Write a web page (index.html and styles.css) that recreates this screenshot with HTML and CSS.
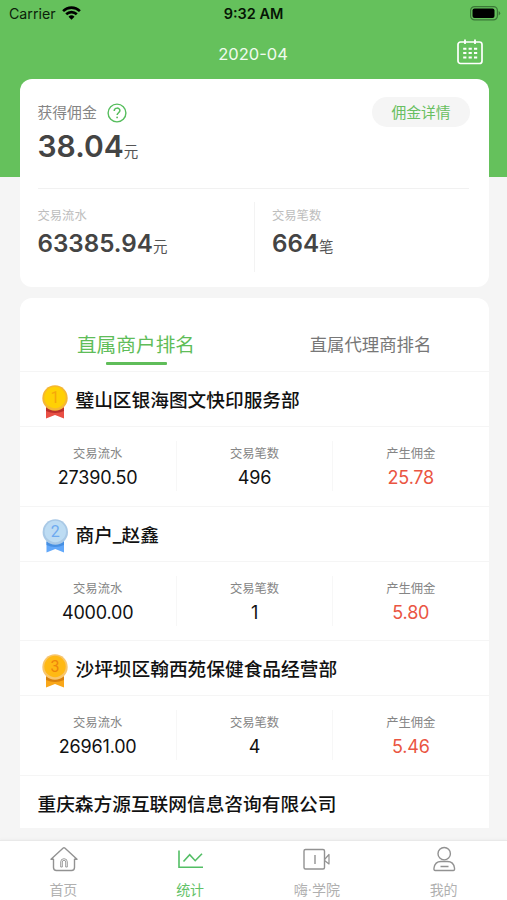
FILE: index.html
```html
<!DOCTYPE html>
<html lang="zh-CN">
<head>
<meta charset="utf-8">
<meta name="viewport" content="width=device-width">
<title>统计</title>
<link rel="stylesheet" href="styles.css">
</head>
<body>
<div class="app">
  <header class="top">
    <div class="status">
      <div class="carrier"><span>Carrier</span>
        <svg width="19" height="14" viewBox="0 0 19 14" fill="none" stroke="#000" stroke-width="2.6"><path d="M1.1 5.1a12 12 0 0 1 16.8 0M4.2 8.3a7.6 7.6 0 0 1 10.6 0"/><path d="M6.5 10.7a4.3 4.3 0 0 1 6 0L9.500 13.700z" fill="#000" stroke="none"/></svg>
      </div>
      <div class="time">9:32 AM</div>
      <svg class="battery" width="31" height="15" viewBox="0 0 31 15"><rect x=".6" y=".6" width="26.800" height="13.300" rx="4" fill="none" stroke="#3b7837" stroke-width="1.200"/><rect x="2.500" y="2.500" width="22" height="9.500" rx="2" fill="#000"/><path d="M28.600 5v4.500q1.600-.6 1.600-2.200T28.600 5z" fill="#3b7837"/></svg>
    </div>
    <div class="titlebar">
      <h1>2020-04</h1>
      <svg class="calendar" width="26" height="26" viewBox="0 0 26 26" fill="none" stroke="#fff" stroke-width="1.700"><rect x="1" y="3" width="24" height="21.500" rx="2.500"/><path d="M8 .5v4.500M18 .5v4.500" stroke-width="1.800"/><path d="M6.200 9.800h14M6.200 14.100h14M6.200 18.400h14" stroke-width="2" stroke-dasharray="3.200 2.200"/></svg>
    </div>
  </header>
  <main>
    <section class="card summary">
      <div class="earned">
        <div>
          <div class="caption"><span>获得佣金</span>
            <svg width="20" height="20" viewBox="0 0 20 20" fill="none" stroke="#55bd5c" stroke-width="1.400"><circle cx="10" cy="10" r="8.900"/><path d="M7.200 7.900c.1-3.700 5.700-3.600 5.700-.3 0 2.100-2.800 2.300-2.800 4.500" stroke-width="1.500"/><circle cx="10.100" cy="14.400" r=".9" fill="#55bd5c" stroke="none"/></svg>
          </div>
          <div class="amount big">38.04<small>元</small></div>
        </div>
        <a class="pill">佣金详情</a>
      </div>
      <div class="totals">
        <div class="total"><div class="label">交易流水</div><div class="amount">63385.94<small>元</small></div></div>
        <div class="total"><div class="label">交易笔数</div><div class="amount">664<small>笔</small></div></div>
      </div>
    </section>
    <section class="card ranking">
      <nav class="tabs"><a class="tab active">直属商户排名</a><a class="tab">直属代理商排名</a></nav>
      <article class="merchant">
        <h2><svg class="medal" width="27" height="36" viewBox="0 0 27 36"><path d="M5 23h18v11.500l-9-3.500-9 3.500z" fill="#e94f45"/><path d="M5 24h18v3q-9 4-18 0z" fill="#b92f2c"/><circle cx="14" cy="14" r="12.700" fill="#f5b733"/><circle cx="14" cy="13.500" r="10.700" fill="#ffd004"/><text x="14" y="18.800" fill="#f6a70b">1</text></svg>璧山区银海图文快印服务部</h2>
        <div class="stats"><div><span>交易流水</span><b>27390.50</b></div><div><span>交易笔数</span><b>496</b></div><div><span>产生佣金</span><b class="red">25.78</b></div></div>
      </article>
      <article class="merchant">
        <h2><svg class="medal" width="27" height="36" viewBox="0 0 27 36"><path d="M5.500 23h17.500v11.500l-8.700-3.500-8.800 3.500z" fill="#62a8fa"/><path d="M5.500 24H23v3q-9 4-17.500 0z" fill="#468fe2"/><circle cx="14.300" cy="14" r="12.700" fill="#a9c9e6"/><circle cx="14.300" cy="13.500" r="10.700" fill="#bddcf3"/><text x="14.300" y="18.800" fill="#6eaaf0">2</text></svg>商户_赵鑫</h2>
        <div class="stats"><div><span>交易流水</span><b>4000.00</b></div><div><span>交易笔数</span><b>1</b></div><div><span>产生佣金</span><b class="red">5.80</b></div></div>
      </article>
      <article class="merchant">
        <h2><svg class="medal" width="27" height="36" viewBox="0 0 27 36"><path d="M5 23h18v11.500l-9-3.500-9 3.500z" fill="#f9a719"/><path d="M5 24h18v3q-9 4-18 0z" fill="#d77f0c"/><circle cx="14" cy="14" r="12.700" fill="#f8c56c"/><circle cx="14" cy="13.500" r="10.700" fill="#ffb914"/><text x="14" y="18.800" fill="#ee850b">3</text></svg>沙坪坝区翰西苑保健食品经营部</h2>
        <div class="stats"><div><span>交易流水</span><b>26961.00</b></div><div><span>交易笔数</span><b>4</b></div><div><span>产生佣金</span><b class="red">5.46</b></div></div>
      </article>
      <article class="merchant"><h2>重庆森方源互联网信息咨询有限公司</h2></article>
    </section>
  </main>
  <nav class="bottom">
    <a><svg width="30" height="28" viewBox="0 0 30 28" fill="none" stroke="#929292" stroke-width="1.400" stroke-linejoin="round"><path d="M3 14.200 15.200 3q.8-.6 1.600 0L29 14.200h-2.500v8.300q0 3-3 3H8.500q-3 0-3-3v-8.300z"/><path d="M12.700 22v-5q0-3.300 3.300-3.300t3.300 3.300v5h-1.600v-5q0-1.700-1.700-1.700T14.300 17v5z" stroke-width=".9"/></svg><span>首页</span></a>
    <a class="active"><svg width="30" height="28" viewBox="0 0 30 28" fill="none" stroke="#53be65" stroke-width="1.600"><path d="M4 5.500v16.700h24M8.500 16.500l6.200-6.800 5.500 6 6.800-7"/></svg><span>统计</span></a>
    <a><svg width="30" height="28" viewBox="0 0 30 28" fill="none" stroke="#929292" stroke-width="1.400" stroke-linejoin="round"><rect x="2" y="4.500" width="20.500" height="19.500" rx="1.500"/><path d="M13 10v9"/><path d="M22.500 14.500l4.500-5v9.500l-4.500-3.500" stroke-width="1.200"/></svg><span>嗨·学院</span></a>
    <a><svg width="30" height="28" viewBox="0 0 30 28" fill="none" stroke="#929292" stroke-width="1.400" stroke-linejoin="round"><circle cx="15.200" cy="8.700" r="6.200"/><path d="M6.300 25.500q-1.700 0-1.300-2.500c.6-4 3.500-6.500 7-6.500h6.500c3.500 0 6.400 2.500 7 6.500q.4 2.500-1.300 2.500zM11.500 21.500h8"/></svg><span>我的</span></a>
  </nav>
</div>
</body>
</html>
```
FILE: styles.css
```css
* { box-sizing: border-box; }
body {
  margin: 0;
  font-family: Inter, "Noto Sans CJK SC", sans-serif;
  background: #f5f5f5;
  color: #111;
}
h1, h2 { margin: 0; }
svg { display: block; flex: none; }
.app { height: 900px; display: flex; flex-direction: column; overflow: hidden; }
.top { height: 177px; flex: none; background: #65c15c; }
.status {
  height: 28px;
  padding: 0 6px 0 9px;
  display: grid;
  grid-template-columns: 1fr auto 1fr;
  align-items: center;
  line-height: 28px;
  color: #0b210a;
}
.carrier { display: flex; align-items: center; gap: 6px; font-size: 14.2px; }
.carrier svg { margin-bottom: 2px; }
.time { font-weight: 600; font-size: 14.500px; color: #051505; margin-left: -3px; }
.battery { justify-self: end; margin: -2px 0 0; }
.titlebar {
  height: 50px;
  padding: 0 24px 0 49px;
  display: flex;
  align-items: center;
}
.titlebar h1 { flex: 1; padding-top: 2px; text-align: center; font-size: 16.500px; font-weight: 400; color: #f0fbef; }
.calendar { margin-top: -3px; }
main { flex: 1; margin-top: -98px; padding: 0 18.500px 12px 19.500px; min-height: 0; }
.card { background: #fff; border-radius: 12px; }
.summary { height: 207.500px; padding: 0 20px 0 18px; }
.earned {
  height: 110px;
  padding-top: 18px;
  border-bottom: 1px solid #f1f1f1;
  display: flex;
  justify-content: space-between;
  align-items: flex-start;
}
.caption { height: 30px; display: flex; align-items: center; gap: 10.500px; font-size: 14.800px; color: #858585; }
.caption span { margin-top: -2px; }
.caption svg { margin-top: 1px; }
.amount { font-size: 24.200px; line-height: 32px; font-weight: 600; color: #444; white-space: nowrap; }
.amount small { font-size: 14.500px; font-weight: 400; color: #555; }
.amount.big { font-size: 30px; line-height: 38px; }
.pill {
  width: 98px;
  margin-right: -1.500px;
  height: 30px;
  line-height: 32px;
  border-radius: 15px;
  background: #f5f5f5;
  color: #68bf60;
  text-align: center;
  font-size: 14.800px;
}
.totals { display: grid; grid-template-columns: 216px 1fr; padding-top: 13px; }
.total { height: 70px; padding-top: 4px; }
.total + .total { border-left: 1px solid #f3f3f3; padding-left: 17.500px; }
.label { font-size: 12.300px; line-height: 20px; color: #bdbdbd; }
.total .amount { margin-top: 2px; }
.ranking { height: 530px; margin-top: 11.500px; border-radius: 12px 12px 0 0; overflow: hidden; }
.tabs { height: 74px; display: grid; grid-template-columns: 233px 1fr; border-bottom: 1px solid #f5f5f5; }
.tab { display: flex; flex-direction: column; align-items: center; padding-top: 32px; font-size: 17.400px; line-height: 30px; color: #777; }
.tab.active { font-size: 19.700px; color: #5fbd59; }
.tab.active::after { content: ""; width: 61px; height: 2.500px; margin-top: 2px; background: #5fbd59; border-radius: 1px; }
.merchant { height: 134.500px; border-bottom: 1px solid #f5f5f5; }
.merchant h2 {
  height: 55px;
  padding: 4px 0 0 18px;
  display: flex;
  align-items: center;
  font-size: 18.700px;
  line-height: 30px;
  font-weight: 500;
  border-bottom: 1px solid #f5f5f5;
}
.medal { margin: 1px 7.500px 0 3.500px; }
.medal text { font: 400 16px Roboto, sans-serif; text-anchor: middle; stroke: currentColor; stroke-width: 0; }
.stats { display: grid; grid-template-columns: repeat(3, 1fr); padding-top: 14px; }
.stats div { height: 50px; text-align: center; display: flex; flex-direction: column; }
.stats div + div { border-left: 1px solid #f7f7f7; }
.stats span { font-size: 12.300px; line-height: 25px; color: #858585; }
.stats b { font-size: 18px; line-height: 24px; font-weight: 400; letter-spacing: -.2px; }
.stats .red { color: #ea5542; }
.bottom {
  height: 60px;
  flex: none;
  display: grid;
  grid-template-columns: repeat(4, 1fr);
  background: #fff;
  border-top: 1px solid #e9e9e9;
  box-shadow: 0 -1px 2px #eee;
}
.bottom a { display: flex; flex-direction: column; align-items: center; padding-top: 4px; font-size: 14px; line-height: 20px; color: #b0b0b0; }
.bottom span { margin-top: 7px; }
.bottom .active { color: #62c267; }
```
